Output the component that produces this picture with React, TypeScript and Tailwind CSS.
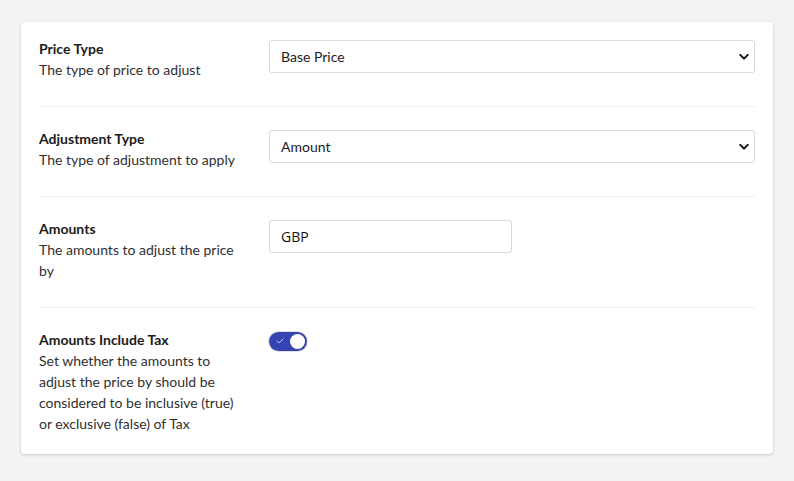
import { useState } from 'react'

function Chevron() {
  return (
    <svg viewBox="0 0 12 8" className="pointer-events-none absolute right-[6px] top-1/2 h-[7px] w-[10px] -translate-y-1/2" fill="none">
      <path d="M1.5 1.5 6 6l4.5-4.5" stroke="#111" strokeWidth="2.4" strokeLinecap="round" strokeLinejoin="round" />
    </svg>
  )
}

function SelectField({ value, options }: { value: string; options: string[] }) {
  return (
    <div className="relative w-full">
      <select
        defaultValue={value}
        className="h-[33px] w-full appearance-none rounded-[3px] border border-[#d9d9d9] bg-white pl-[11px] pr-8 text-[14px] text-[#1b1b1b] outline-none"
      >
        {options.map((o) => (
          <option key={o}>{o}</option>
        ))}
      </select>
      <Chevron />
    </div>
  )
}

function Row({ title, description, children, last }: { title: string; description: React.ReactNode; children: React.ReactNode; last?: boolean }) {
  return (
    <div className={last ? 'flex pt-[23px]' : 'flex border-b border-[#f0f0f0] pb-6 pt-[23px] first:pt-0'}>
      <div className="relative top-[-2px] w-[230px] shrink-0 pr-[30px]">
        <div className="text-[14px] font-bold leading-[21px] text-[#1b1b1b]">{title}</div>
        <div className="text-[14px] leading-[21px] text-[#303030]">{description}</div>
      </div>
      <div className="flex-1">{children}</div>
    </div>
  )
}

export default function App() {
  const [includeTax, setIncludeTax] = useState(true)

  return (
    <div className="min-h-[481px] bg-[#f3f3f5] px-[21px] pt-[22px] font-['Lato',sans-serif]">
      <div className="rounded-[4px] bg-white px-[18px] pb-[18px] pt-[18px] shadow-[0_1px_3px_rgba(0,0,0,0.18)]">
        <Row title="Price Type" description="The type of price to adjust">
          <SelectField value="Base Price" options={['Base Price', 'Sale Price']} />
        </Row>
        <Row title="Adjustment Type" description="The type of adjustment to apply">
          <SelectField value="Amount" options={['Amount', 'Percentage']} />
        </Row>
        <Row title="Amounts" description="The amounts to adjust the price by">
          <input
            defaultValue="GBP"
            className="h-[33px] w-[243px] rounded-[3px] border border-[#d9d9d9] bg-white px-[11px] font-['Open_Sans',sans-serif] text-[14px] text-[#111] outline-none"
          />
        </Row>
        <Row
          last
          title="Amounts Include Tax"
          description="Set whether the amounts to adjust the price by should be considered to be inclusive (true) or exclusive (false) of Tax"
        >
          <button
            type="button"
            onClick={() => setIncludeTax((v) => !v)}
            className={
              includeTax
                ? 'relative mt-[1px] flex h-[19px] w-[38px] items-center rounded-full bg-[#3544b1] shadow-[0_0_0_1px_rgba(0,0,0,0.12)]'
                : 'relative mt-[1px] flex h-[19px] w-[38px] items-center rounded-full bg-[#ccc]'
            }
          >
            {includeTax ? (
              <svg viewBox="0 0 10 8" className="absolute left-[7px] top-[6px] h-[6px] w-[8px]" fill="none">
                <path d="M1 4.2 3.6 6.6 9 1.2" stroke="#c9cdf0" strokeWidth="1.3" strokeLinecap="round" strokeLinejoin="round" />
              </svg>
            ) : null}
            <span className={includeTax ? 'absolute right-[2px] h-[15px] w-[15px] rounded-full bg-white' : 'absolute left-[2px] h-[15px] w-[15px] rounded-full bg-white'} />
          </button>
        </Row>
      </div>
    </div>
  )
}
